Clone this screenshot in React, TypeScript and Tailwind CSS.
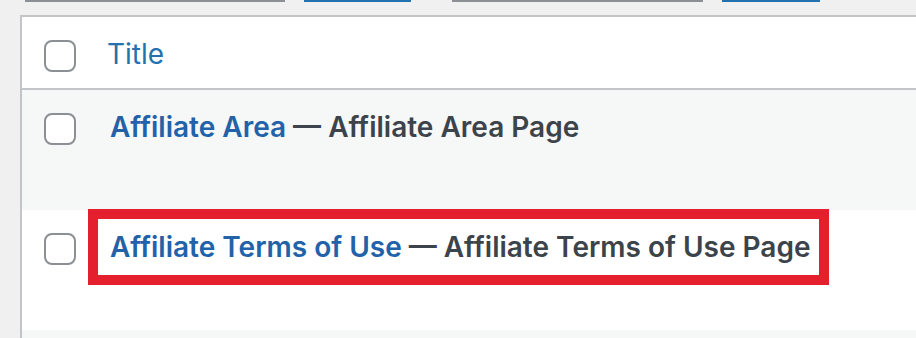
import React from 'react';

const Checkbox: React.FC = () => (
    <div className="w-[32px] h-[32px] shrink-0 rounded-[8px] border-2 border-[#8c8f94] bg-white" />
);

const rows = [
    { id: 1, title: 'Affiliate Area', state: 'Affiliate Area Page', highlight: false, bg: 'bg-[#f6f7f7]' },
    { id: 2, title: 'Affiliate Terms of Use', state: 'Affiliate Terms of Use Page', highlight: true, bg: 'bg-white' },
];

const App: React.FC = () => {
    return (
        <div className="w-[916px] h-[338px] overflow-hidden bg-[#f0f0f1]" style={{ fontFamily: 'Inter, "Noto Sans", sans-serif' }}>
            {/* bottom edges of the bulk action / filter controls above */}
            <div className="flex items-start h-[2px] pl-[25px]">
                <div className="w-[260px] h-[2px] bg-[#8c8f94]" />
                <div className="w-[107px] h-[2px] ml-[19px] bg-[#2271b1]" />
                <div className="w-[251px] h-[2px] ml-[41px] bg-[#8c8f94]" />
                <div className="w-[98px] h-[2px] ml-[19px] bg-[#2271b1]" />
            </div>

            <div className="mt-[13px] ml-[20px] w-[920px] border-l-2 border-t-2 border-[#c3c4c7] bg-white">
                {/* header */}
                <div className="flex items-start h-[73px] pl-[22px] pt-[23px] bg-white border-b-2 border-[#c3c4c7]">
                    <Checkbox />
                    <span className="ml-[31px] mt-[-4px] text-[28px] leading-[36px] text-[#2271b1]">Title</span>
                </div>

                {rows.map((row) => (
                    <div key={row.id} className={`relative flex items-start h-[120px] pl-[22px] pt-[23px] ${row.bg}`}>
                        <Checkbox />
                        <div className="ml-[34px] mt-[-4px] text-[28px] leading-[36px] font-semibold text-[#3c434a] whitespace-nowrap">
                            <span className="text-[#2162a8]">{row.title}</span> — {row.state}
                        </div>
                        {row.highlight && (
                            <div className="absolute left-[66px] top-[-1px] w-[741px] h-[76px] border-[10px] border-[#e5202e]" />
                        )}
                    </div>
                ))}
                <div className="h-[20px] bg-[#f6f7f7]" />
            </div>
        </div>
    );
};

export default App;
